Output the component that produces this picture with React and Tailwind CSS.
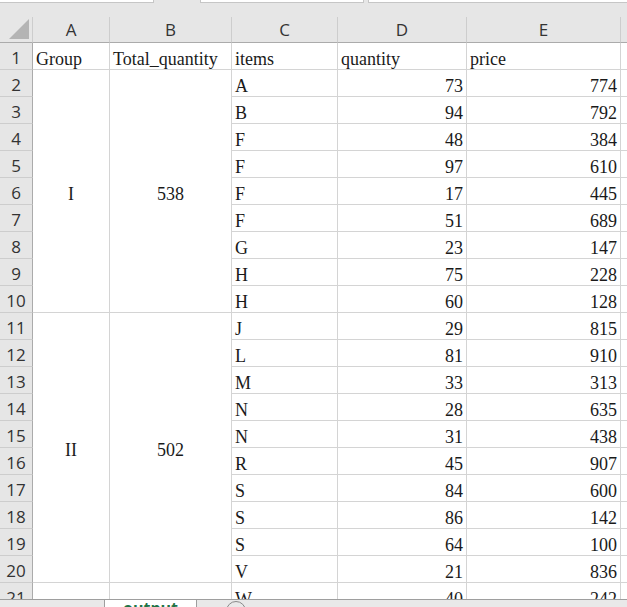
import React from 'react';

const rows = [
  ['A', 73, 774], ['B', 94, 792], ['F', 48, 384], ['F', 97, 610], ['F', 17, 445],
  ['F', 51, 689], ['G', 23, 147], ['H', 75, 228], ['H', 60, 128], ['J', 29, 815],
  ['L', 81, 910], ['M', 33, 313], ['N', 28, 635], ['N', 31, 438], ['R', 45, 907],
  ['S', 84, 600], ['S', 86, 142], ['S', 64, 100], ['V', 21, 836], ['W', 40, 242],
];

const serif = { fontFamily: '"Liberation Serif", "Times New Roman", serif' };
const sans = { fontFamily: '"Open Sans", "Noto Sans", sans-serif' };

const cell = 'border-r border-b border-[#d4d4d4] bg-white text-[18px] text-[#1a1a1a] flex items-center pt-[6px] overflow-hidden whitespace-nowrap';
const rowHead = 'border-r border-b border-r-[#ababab] border-b-[#cdcdcd] bg-[#e6e6e6] text-[17px] text-[#333] flex items-center justify-center pt-[4px]';
const colHead = 'border-r border-b border-r-[#cdcdcd] border-b-[#ababab] bg-[#e6e6e6] text-[17px] text-[#333] flex items-center justify-center pt-[1px]';

export default function App() {
  return (
    <div className="w-[627px] h-[607px] flex flex-col overflow-hidden bg-[#e6e6e6]" style={sans}>
      {/* top strip */}
      <div className="h-[17px] flex items-start shrink-0">
        <div className="w-[154px] h-[3px] bg-white border-b border-r border-[#c6c6c6]" />
        <div className="w-[46px]" />
        <div className="w-[164px] h-[3px] bg-white border-b border-x border-[#c6c6c6]" />
        <div className="w-[4px]" />
        <div className="flex-1 h-[3px] bg-white border-b border-l border-[#c6c6c6]" />
      </div>

      {/* grid */}
      <div className="flex-1 overflow-hidden">
        <div
          className="grid"
          style={{ gridTemplateColumns: '33px 77px 122px 106px 129px 154px 7px', gridTemplateRows: '26px repeat(21, 27px)' }}
        >
          <div className={colHead + ' relative !justify-end !items-end'}>
            <svg width="20" height="20" className="mb-[3px] mr-[3px]" viewBox="0 0 20 20">
              <polygon points="20,0 20,20 0,20" fill="#b4b4b4" />
            </svg>
          </div>
          {['A', 'B', 'C', 'D', 'E'].map((c) => (
            <div key={c} className={colHead}>{c}</div>
          ))}
          <div className={colHead + ' border-r-0'} />

          <div className={rowHead}>1</div>
          <div className={cell + ' pl-[3px]'} style={serif}>Group</div>
          <div className={cell + ' pl-[3px]'} style={serif}>Total_quantity</div>
          <div className={cell + ' pl-[3px]'} style={serif}>items</div>
          <div className={cell + ' pl-[3px]'} style={serif}>quantity</div>
          <div className={cell + ' pl-[3px]'} style={serif}>price</div>
          <div className={cell + ' border-r-0'} />

          {rows.map(([item, q, p], i) => {
            const n = i + 2;
            return (
              <React.Fragment key={n}>
                <div className={rowHead} style={{ gridRow: n + 1, gridColumn: 1 }}>{n}</div>
                {n === 2 && (
                  <>
                    <div className={cell + ' justify-center'} style={{ ...serif, gridRow: '3 / span 9', gridColumn: 2 }}>I</div>
                    <div className={cell + ' justify-center'} style={{ ...serif, gridRow: '3 / span 9', gridColumn: 3 }}>538</div>
                  </>
                )}
                {n === 11 && (
                  <>
                    <div className={cell + ' justify-center'} style={{ ...serif, gridRow: '12 / span 10', gridColumn: 2 }}>II</div>
                    <div className={cell + ' justify-center'} style={{ ...serif, gridRow: '12 / span 10', gridColumn: 3 }}>502</div>
                  </>
                )}
                {n === 21 && (
                  <>
                    <div className={cell} style={{ gridRow: 22, gridColumn: 2 }} />
                    <div className={cell} style={{ gridRow: 22, gridColumn: 3 }} />
                  </>
                )}
                <div className={cell + ' pl-[3px]'} style={{ ...serif, gridRow: n + 1, gridColumn: 4 }}>{item}</div>
                <div className={cell + ' justify-end pr-[3px]'} style={{ ...serif, gridRow: n + 1, gridColumn: 5 }}>{q}</div>
                <div className={cell + ' justify-end pr-[3px]'} style={{ ...serif, gridRow: n + 1, gridColumn: 6 }}>{p}</div>
                <div className={cell + ' border-r-0'} style={{ gridRow: n + 1, gridColumn: 7 }} />
              </React.Fragment>
            );
          })}
        </div>
      </div>

      {/* sheet tabs */}
      <div className="h-[8px] shrink-0 flex overflow-hidden border-t border-[#9e9e9e] bg-[#e6e6e6]">
        <div className="w-[105px] border-r border-[#9e9e9e] bg-[#e9e9e9]" />
        <div className="w-[91px] bg-white flex justify-center items-start">
          <span className="text-[16px] leading-[14px] font-bold text-[#217346] mt-[1px]">output</span>
        </div>
        <div className="flex-1 border-l border-[#9e9e9e] bg-[#e9e9e9] pl-[29px] pt-[1px]">
          <div className="w-[20px] h-[20px] rounded-full border border-[#8a8a8a]" />
        </div>
      </div>
    </div>
  );
}
